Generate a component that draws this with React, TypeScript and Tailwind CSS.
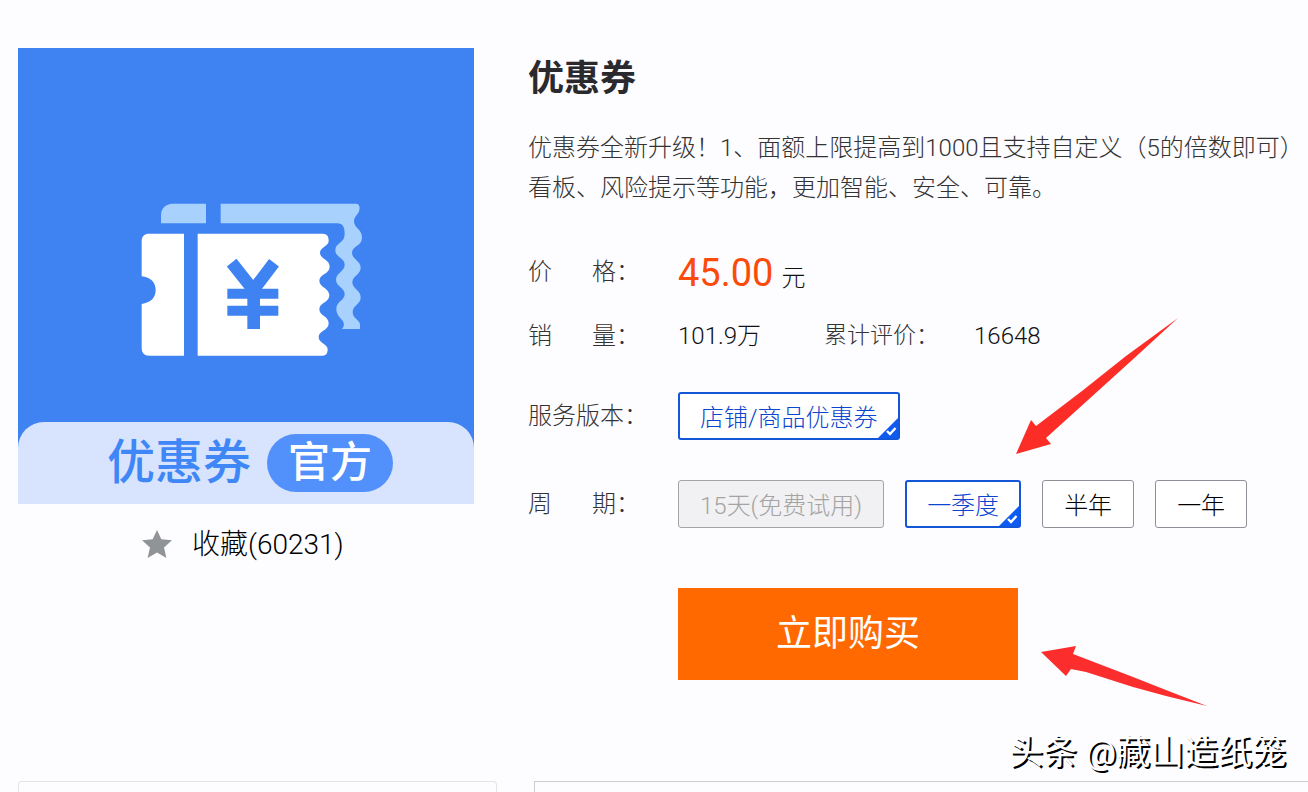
import { useState, type ReactNode } from "react";
import clsx from "clsx";

function CouponIcon() {
  return (
    <svg viewBox="0 0 456 456" className="block w-full" aria-hidden="true">
      <g transform="translate(102 142) scale(0.33333)">
        <path
          fill="#a9d1fe"
          d="M123 100V76C123 56 137 41 158 41H258V100Z M302 41H708C718 41 720 50 718 60C717 72 702 78 702 94C702 114 726 118 726 143C726 168 696 168 696 188C696 208 722 212 722 233C722 254 697 257 697 277C697 297 722 300 722 322C722 344 698 346 698 366C698 386 720 390 720 404V417H666C674 408 673 398 666 390C658 380 649 372 649 356C649 334 674 332 674 312C674 292 648 290 648 269C648 248 674 244 674 224C674 204 646 202 646 181C646 158 674 160 674 132C674 112 668 100 652 100H302Z"
        />
        <path
          fill="#ffffff"
          d="M192 131H88C73 131 65 139 65 154V259C92 261 107 278 107 300C107 323 92 338 65 342V473C65 489 73 497 88 497H192Z M233 131H608C622 131 626 140 626 152C626 170 600 170 600 188C600 208 629 208 629 230C629 252 598 252 598 272C598 292 628 294 628 316C628 338 598 338 598 358C598 378 626 378 626 400C626 422 596 422 596 441C596 460 623 462 623 478C623 491 618 497 608 497H233Z"
        />
        <g fill="none" stroke="#3f83f3" strokeWidth="30" strokeLinejoin="round">
          <path strokeWidth="37" d="M335 218L400 300L462 218" />
          <path strokeWidth="38" d="M401 290V417" />
          <path d="M322 311H475 M322 362H475" />
        </g>
      </g>
    </svg>
  );
}

function Row({ label, children, className }: { label: string[]; children: ReactNode; className?: string }) {
  return (
    <div className={clsx("flex items-center", className)}>
      <div className="flex w-[150px] shrink-0 gap-10 text-[#333]">
        {label.map((part) => (
          <span key={part}>{part}</span>
        ))}
      </div>
      {children}
    </div>
  );
}

function Option({
  children,
  selected,
  disabled,
  onClick,
}: {
  children: ReactNode;
  selected?: boolean;
  disabled?: boolean;
  onClick?: () => void;
}) {
  return (
    <button
      type="button"
      aria-pressed={selected}
      disabled={disabled}
      onClick={onClick}
      className={clsx(
        "relative h-12 shrink-0 rounded-[3px] pt-[3px] whitespace-nowrap",
        selected && "border-2 border-[#1456d8] bg-white px-5 text-[#0b45d0]",
        disabled && "border border-[#a3a5a8] bg-[#f1f0f2] px-[21px] text-[#a4a4a4]",
        !selected && !disabled && "border border-[#8d9197] bg-white px-[21px] text-black",
      )}
    >
      {children}
      {selected && (
        <svg viewBox="0 0 20 20" className="absolute right-0 bottom-0 size-5" aria-hidden="true">
          <path d="M20 0V20H0Z" fill="#0d5bf0" />
          <path d="M9 13L12 16L17.5 10" fill="none" stroke="#fff" strokeWidth="2.4" />
        </svg>
      )}
    </button>
  );
}

export default function App() {
  const [period, setPeriod] = useState("一季度");

  return (
    <div className="relative min-h-screen overflow-hidden bg-[#fdfcff] font-['Roboto','Noto_Sans_CJK_SC',sans-serif] text-2xl font-light text-[#111]">
      <main className="flex gap-[54px] pt-12 pl-[18px]">
        <aside className="w-[456px] shrink-0">
          <div className="relative bg-[#3f83f3]">
            <CouponIcon />
            <div className="absolute inset-x-0 bottom-0 flex h-[82px] items-center justify-center gap-4 rounded-t-[26px] bg-[#d8e3fd] pl-2">
              <span className="text-5xl font-medium text-[#3f86f6]">优惠券</span>
              <span className="flex h-[58px] items-center rounded-full bg-[#5290fb] px-[21px] text-[42px] font-medium text-white">
                官方
              </span>
            </div>
          </div>
          <button type="button" className="mt-5 ml-[124px] flex h-10 items-center gap-5 text-[28px] text-black">
            <svg viewBox="0 0 30 28" className="h-7 w-[30px]" aria-hidden="true">
              <path
                fill="#919497"
                d="M15 0L19.3 9.3L30 10.3L22 17.6L24.4 28L15 22.6L5.600 28L8 17.6L0 10.300L10.700 9.300Z"
              />
            </svg>
            <span className="pt-0.5">收藏(60231)</span>
          </button>
        </aside>

        <section className="min-w-0 grow">
          <h1 className="mt-[9px] text-4xl leading-11 font-bold text-[#2a2a2e]">优惠券</h1>
          <p className="mt-[27px] leading-10 whitespace-nowrap text-[#333]">
            优惠券全新升级！1、面额上限提高到1000且支持自定义（5的倍数即可）
            <br />
            看板、风险提示等功能，更加智能、安全、可靠。
          </p>

          <Row label={["价", "格："]} className="mt-10 h-12">
            <span className="flex items-baseline gap-2 pt-0.5">
              <span className="text-[38px] font-normal text-[#fa4b0a]">45.00</span>
              <span>元</span>
            </span>
          </Row>
          <Row label={["销", "量："]} className="mt-4 h-12">
            <span className="w-[146px]">101.9万</span>
            <span className="w-[150px] text-[23px] text-[#333]">累计评价：</span>
            <span>16648</span>
          </Row>
          <Row label={["服务版本："]} className="mt-8">
            <Option selected>店铺/商品优惠券</Option>
          </Row>
          <Row label={["周", "期："]} className="relative mt-10">
            <div className="flex gap-[21px]">
              <Option disabled>15天(免费试用)</Option>
              {["一季度", "半年", "一年"].map((name) => (
                <Option key={name} selected={period === name} onClick={() => setPeriod(name)}>
                  {name}
                </Option>
              ))}
            </div>
            <svg viewBox="0 0 162 138" className="absolute bottom-[73px] left-[488px] h-[138px] w-[162px]" aria-hidden="true">
              <path fill="#fc2d26" d="M0 137L15 103L20 109L66 74L110 39L162 1L114 45L30 121L35 127Z" />
            </svg>
          </Row>
          <div className="relative mt-[60px] ml-[150px] flex">
            <button type="button" className="h-[92px] w-[340px] bg-[#ff6900] text-4xl font-normal text-white">
              立即购买
            </button>
            <svg viewBox="0 0 166 62" className="absolute top-[58px] left-[363px] h-[62px] w-[166px]" aria-hidden="true">
              <path fill="#fc2d2d" d="M0 6L35 0L32 8L92 31L130 46L166 60L125 50L92 41L45 26L30 23L25 30Z" />
            </svg>
          </div>
        </section>
      </main>

      <div className="mt-[101px] flex gap-[37px] pl-[18px]">
        <div className="h-[11px] w-[479px] shrink-0 rounded-t-sm border border-b-0 border-[#e4e4e6]" />
        <div className="h-[11px] grow border-t border-l border-[#cdcdd1]" />
      </div>

      <div className="absolute right-[22px] bottom-4 text-[34px] leading-12 font-normal whitespace-nowrap text-white [text-shadow:2px_2px_0_#000]">
        头条 @藏山造纸笼
      </div>
    </div>
  );
}
